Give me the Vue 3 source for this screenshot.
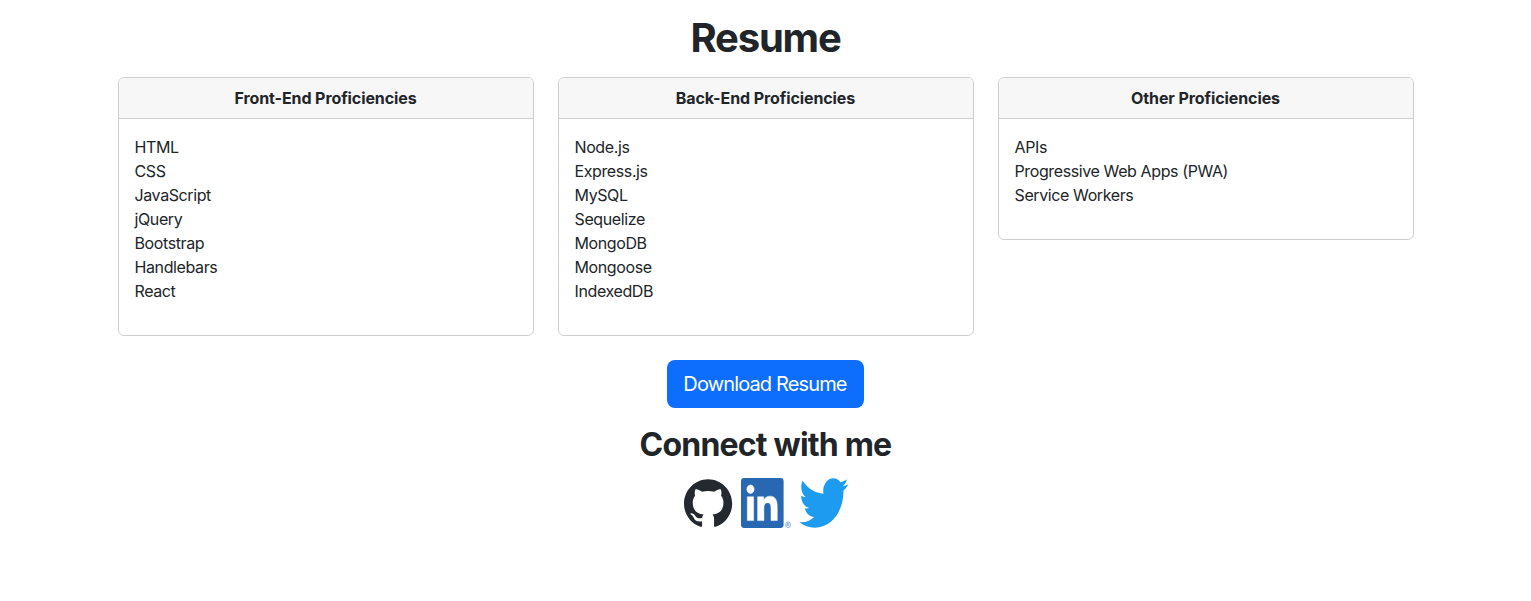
<script setup>
const cards = [
  { key: 'front', title: 'Front-End Proficiencies', items: ['HTML', 'CSS', 'JavaScript', 'jQuery', 'Bootstrap', 'Handlebars', 'React'] },
  { key: 'back', title: 'Back-End Proficiencies', items: ['Node.js', 'Express.js', 'MySQL', 'Sequelize', 'MongoDB', 'Mongoose', 'IndexedDB'] },
  { key: 'other', title: 'Other Proficiencies', items: ['APIs', 'Progressive Web Apps (PWA)', 'Service Workers'] },
]
</script>

<template>
  <main class="resume">
    <h1 class="title">Resume</h1>
    <section class="cards">
      <article v-for="card in cards" :key="card.key" class="card">
        <header class="card-header">{{ card.title }}</header>
        <div class="card-body">
          <ul class="list">
            <li v-for="item in card.items" :key="item">{{ item }}</li>
          </ul>
        </div>
      </article>
    </section>
    <button class="download" type="button">Download Resume</button>
    <h2 class="subtitle">Connect with me</h2>
    <nav class="social">
      <a class="social-link" aria-label="GitHub">
        <svg width="50" height="50" viewBox="0 0 50 50">
          <path transform="translate(1 1.2) scale(.4933 .4968)" fill="#24292f" fill-rule="evenodd" d="M48.854 0C21.839 0 0 22 0 49.217c0 21.756 13.993 40.172 33.405 46.69 2.427.49 3.316-1.059 3.316-2.362 0-1.141-.08-5.052-.08-9.127-13.59 2.934-16.42-5.867-16.42-5.867-2.184-5.704-5.42-7.17-5.42-7.17-4.448-3.015.324-3.015.324-3.015 4.934.326 7.523 5.052 7.523 5.052 4.367 7.496 11.404 5.378 14.235 4.074.404-3.178 1.699-5.378 3.074-6.6-10.839-1.141-22.243-5.378-22.243-24.283 0-5.378 1.94-9.778 5.014-13.2-.485-1.222-2.184-6.275.486-13.038 0 0 4.125-1.304 13.426 5.052a46.97 46.97 0 0 1 12.214-1.63c4.125 0 8.33.571 12.213 1.63 9.302-6.356 13.427-5.052 13.427-5.052 2.67 6.763.97 11.816.485 13.038 3.155 3.422 5.015 7.822 5.015 13.2 0 18.905-11.404 23.06-22.324 24.283 1.78 1.548 3.316 4.481 3.316 9.126 0 6.6-.08 11.897-.08 13.526 0 1.304.89 2.853 3.316 2.364 19.412-6.52 33.405-24.935 33.405-46.691C97.707 22 75.788 0 48.854 0z" />
        </svg>
      </a>
      <a class="social-link" aria-label="LinkedIn">
        <svg width="50" height="50" viewBox="0 0 50 50">
          <rect x="0" y="0" width="42.6" height="50" rx="3" ry="3.4" fill="#2867b2" />
          <path transform="scale(1.775 2.083)" fill="#fff" stroke="#fff" stroke-width=".25" d="M20.447 20.452h-3.554v-5.569c0-1.328-.027-3.037-1.852-3.037-1.853 0-2.136 1.445-2.136 2.939v5.667H9.351V9h3.414v1.561h.046c.477-.9 1.637-1.85 3.37-1.85 3.601 0 4.267 2.37 4.267 5.455v6.286zM5.337 7.433c-1.144 0-2.063-.926-2.063-2.065 0-1.138.92-2.063 2.063-2.063 1.14 0 2.064.925 2.064 2.063 0 1.139-.925 2.065-2.064 2.065zm1.782 13.019H3.555V9h3.564v11.452z" />
          <ellipse cx="47.1" cy="46.7" rx="2.5" ry="3" fill="none" stroke="#2867b2" stroke-opacity=".7" stroke-width=".65" />
          <path d="M46.2 48.4V45h1a.9.9 0 0 1 0 1.8h-1m1 0 1 1.6" fill="none" stroke="#2867b2" stroke-opacity=".75" stroke-width=".6" />
        </svg>
      </a>
      <a class="social-link" aria-label="Twitter">
        <svg width="50" height="50" viewBox="0 0 50 50">
          <path transform="translate(0 0) scale(.2 .2465)" fill="#1d9bf0" d="M221.95 51.29c.15 2.17.15 4.34.15 6.53 0 66.73-50.8 143.69-143.69 143.69v-.04c-27.44.04-54.31-7.82-77.41-22.64 3.99.48 8 .72 12.02.73 22.74.02 44.83-7.61 62.72-21.66-21.61-.41-40.56-14.5-47.18-35.07 7.57 1.46 15.37 1.16 22.8-.87-23.56-4.76-40.51-25.46-40.51-49.5v-.64c7.02 3.91 14.88 6.08 22.92 6.32C11.58 63.31 4.74 33.79 18.14 10.71c25.64 31.55 63.47 50.73 104.08 52.76-4.07-17.54 1.49-35.92 14.61-48.25 20.34-19.12 52.33-18.14 71.45 2.19 11.31-2.23 22.15-6.38 32.07-12.26-3.77 11.69-11.66 21.62-22.2 27.93 10.01-1.18 19.79-3.86 29-7.95-6.78 10.16-15.32 19.01-25.2 26.16z" />
        </svg>
      </a>
    </nav>
  </main>
</template>

<style>
body {
  margin: 0;
  background: #fff;
}
</style>

<style scoped>
.resume {
  box-sizing: border-box;
  width: 1320px;
  margin: 0 auto;
  padding: 14px 12px 0;
  display: flex;
  flex-direction: column;
  align-items: center;
  font-family: Inter, "Liberation Sans", sans-serif;
  font-size: 16px;
  line-height: 24px;
  color: #212529;
}
.title {
  margin: 0 0 15px;
  font-size: 40px;
  line-height: 48px;
  font-weight: 700;
  letter-spacing: -1.2px;
}
.cards {
  align-self: stretch;
  display: grid;
  grid-template-columns: repeat(3, 1fr);
  align-items: start;
  gap: 24px;
}
.card {
  border: 1px solid #cfcfcf;
  border-radius: 6px;
  overflow: hidden;
}
.card-header {
  padding: 8px 16px;
  border-bottom: 1px solid #cfcfcf;
  background: #f7f7f7;
  text-align: center;
  font-weight: 700;
  letter-spacing: -0.09px;
}
.card-body {
  padding: 16px;
}
.list {
  margin: 0 0 16px;
  padding: 0;
  list-style: none;
  letter-spacing: -0.39px;
}
.download {
  box-sizing: border-box;
  width: 197px;
  height: 48px;
  margin: 24px 0 17px;
  padding: 0 1px 0 0;
  border: 0;
  border-radius: 8px;
  background: #0d6efd;
  color: #fff;
  font-family: inherit;
  font-size: 20px;
  line-height: 30px;
  letter-spacing: -0.86px;
}
.subtitle {
  margin: 0 0 14px;
  font-size: 32px;
  line-height: 39px;
  font-weight: 700;
  letter-spacing: -0.8px;
}
.social {
  display: flex;
  gap: 8px;
  padding-left: 1px;
}
.social-link,
.social-link svg {
  display: block;
}
</style>
